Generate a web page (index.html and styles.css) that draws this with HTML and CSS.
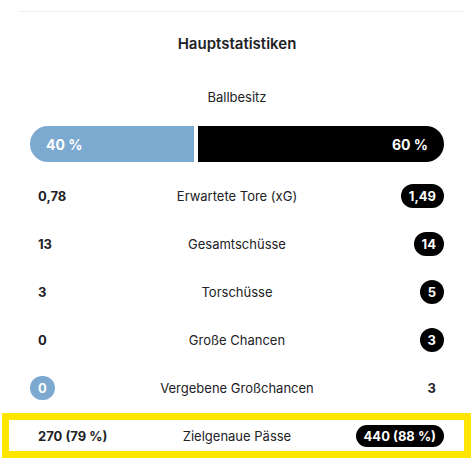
FILE: index.html
```html
<!DOCTYPE html>
<html lang="de">
<head>
<meta charset="utf-8">
<title>Hauptstatistiken</title>
<link rel="stylesheet" href="styles.css">
</head>
<body>
<div class="page">
  <div class="divider"></div>
  <h2 class="title">Hauptstatistiken</h2>
  <div class="section">
    <div class="subtitle">Ballbesitz</div>
    <div class="possession">
      <div class="pos home" style="flex: 40 1 0"><span class="pos-text">40 %</span></div>
      <div class="pos away" style="flex: 60 1 0"><span class="pos-text">60 %</span></div>
    </div>
    <div class="row">
      <span class="val left">0,78</span>
      <span class="label">Erwartete Tore (xG)</span>
      <span class="val right badge dark">1,49</span>
    </div>
    <div class="row">
      <span class="val left">13</span>
      <span class="label">Gesamtschüsse</span>
      <span class="val right badge dark">14</span>
    </div>
    <div class="row">
      <span class="val left">3</span>
      <span class="label">Torschüsse</span>
      <span class="val right badge dark">5</span>
    </div>
    <div class="row">
      <span class="val left">0</span>
      <span class="label">Große Chancen</span>
      <span class="val right badge dark">3</span>
    </div>
    <div class="row">
      <span class="val left badge blue">0</span>
      <span class="label">Vergebene Großchancen</span>
      <span class="val right">3</span>
    </div>
  </div>
  <div class="row highlight">
    <span class="val left">270 (79 %)</span>
    <span class="label">Zielgenaue Pässe</span>
    <span class="val right badge dark">440 (88 %)</span>
  </div>
</div>
</body>
</html>
```

FILE: styles.css
```css
* { box-sizing: border-box; }

html, body {
  margin: 0;
  padding: 0;
  background: #ffffff;
}

body {
  font-family: "Inter", "Liberation Sans", sans-serif;
  color: #222226;
  width: 474px;
  height: 461px;
  overflow: hidden;
}

.divider {
  height: 1px;
  background: #eeeeee;
  margin: 11px 11px 0 20px;
}

.title {
  margin: 22px 0 0;
  font-size: 15px;
  line-height: 20px;
  font-weight: 600;
  text-align: center;
}

.section {
  padding: 0 30px;
}

.subtitle {
  margin-top: 34px;
  font-size: 13px;
  line-height: 18px;
  text-align: center;
}

.possession {
  margin-top: 20px;
  height: 36px;
  display: flex;
  gap: 4px;
  margin-bottom: 10px;
  padding-right: 0;
}

.pos {
  display: flex;
  align-items: center;
  min-width: 0;
  color: #ffffff;
  font-weight: 700;
  font-size: 14px;
}

.pos-text {
  margin: 0 16px;
  white-space: nowrap;
}

.pos.home {
  background: #7ba9d0;
  border-radius: 18px 0 0 18px;
  margin-right: 1px;
}

.pos.away {
  background: #000000;
  border-radius: 0 18px 18px 0;
  justify-content: flex-end;
  margin-left: -1px;
}

.row {
  height: 48px;
  display: grid;
  grid-template-columns: 1fr auto 1fr;
  align-items: center;
}

.label {
  font-size: 13px;
  text-align: center;
}

.val {
  font-size: 13px;
  font-weight: 700;
  padding: 0 8px;
  white-space: nowrap;
}

.val.left { justify-self: start; }
.val.right { justify-self: end; }

.badge {
  height: 24px;
  min-width: 24px;
  border-radius: 12px;
  display: inline-flex;
  align-items: center;
  justify-content: center;
  color: #ffffff;
}

.badge.dark { background: #000000; }
.badge.blue { background: #7ba9d0; }

.row.highlight {
  margin: 1px 3px 0 2px;
  height: 45px;
  border: 7px solid #ffe600;
  padding: 0 20px 0 21px;
}

.row.highlight .badge {
  height: 22px;
  border-radius: 11px;
}
```
